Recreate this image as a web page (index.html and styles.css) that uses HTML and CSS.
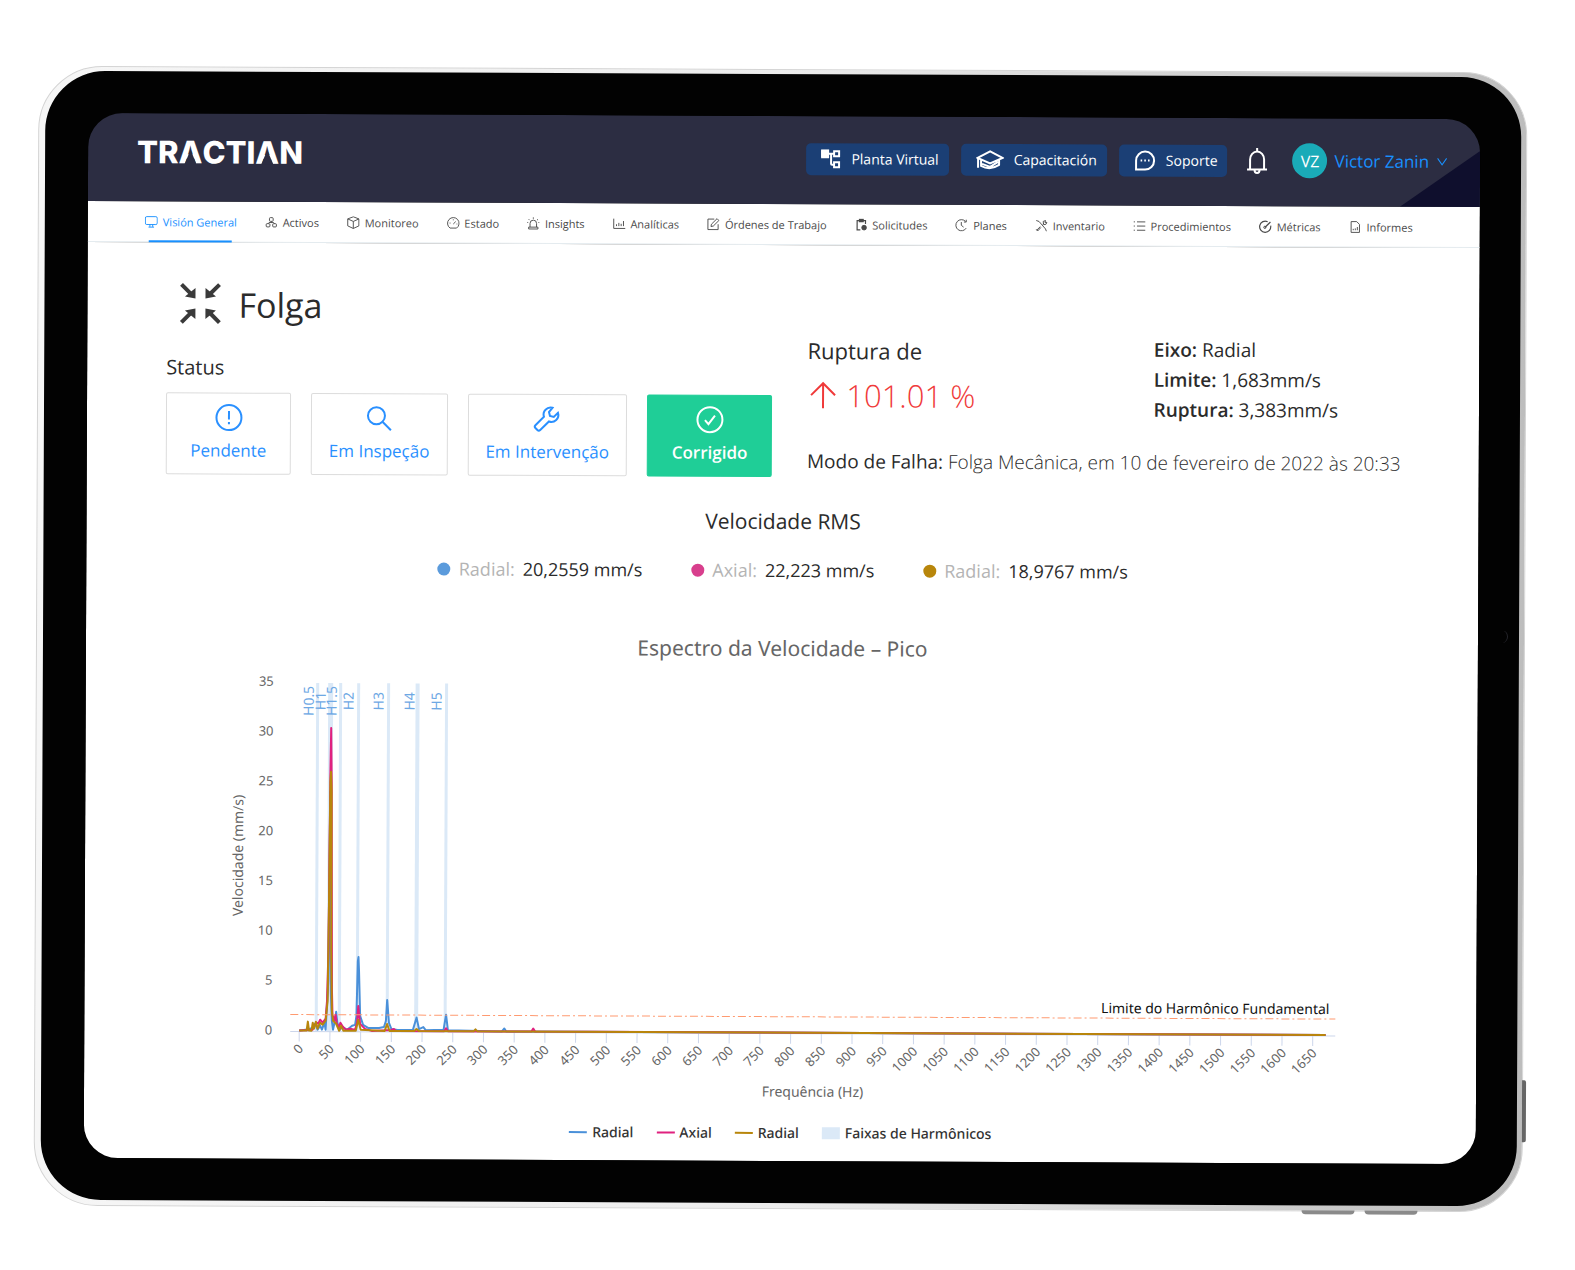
FILE: index.html
```html
<!DOCTYPE html>
<html lang="pt">
<head>
<meta charset="utf-8">
<meta name="viewport" content="width=device-width, initial-scale=1">
<title>Tractian</title>
<link rel="stylesheet" href="styles.css">
</head>
<body>
<div class="device">
  <span class="side-button side-button-right"></span>
  <span class="side-button side-button-bottom first"></span>
  <span class="side-button side-button-bottom second"></span>
  <div class="bezel">
    <span class="camera"></span>
    <div class="screen">
      <header class="topbar">
        <a class="logo" href="#">TR<span class="open-a">A</span>CTI<span class="open-a">A</span>N</a>
        <div class="actions">
          <button class="action" type="button">
            <svg class="action-icon" width="20" height="20" viewBox="0 0 20 20"><rect x="0" y="1" width="7" height="7" fill="currentColor"/><path d="M7 4.500h6M10 4.500v10q0 1 1 1h2"/><rect x="13" y="2" width="5" height="5"/><rect x="13" y="13" width="5" height="5"/></svg>
            Planta Virtual
          </button>
          <button class="action" type="button">
            <svg class="action-icon" width="28" height="20" viewBox="0 0 28 20"><path d="M1.500 8 14 1.500 26.500 8 14 13.500zM5 10v6q9 5 18-1V10M2 9v9M6 14l8 3 8-5"/></svg>
            Capacitación
          </button>
          <button class="action" type="button">
            <svg class="action-icon" width="22" height="22" viewBox="0 0 22 22"><path d="M2 20V11a9 9 0 1 1 9 9z"/><path d="M6.500 11h1.600M10.200 11h1.600M13.900 11h1.600" stroke-width="2"/></svg>
            Soporte
          </button>
          <button class="bell" type="button" aria-label="Notificaciones">
            <svg width="22" height="28" viewBox="0 0 22 28"><path d="M11 1v3M4 22v-9.500a7 8 0 0 1 14 0V22M1 22.500h20M8.500 23a2.500 3 0 0 0 5 0"/></svg>
          </button>
          <button class="user" type="button">
            <span class="avatar">VZ</span>
            Victor Zanin
            <svg width="12" height="10" viewBox="0 0 12 10"><path d="M1.500 1.500 6 8l4.500-6.500"/></svg>
          </button>
        </div>
      </header>

      <nav class="tabs">
        <a class="tab active" href="#"><svg viewBox="0 0 14 14"><rect x="0.600" y="1.500" width="12.800" height="8.500" rx="1.500"/><path d="M5.500 10v2.500M8.500 10v2.500M4 12.800h6"/></svg>Visión General</a>
        <a class="tab" href="#"><svg viewBox="0 0 14 14"><rect x="5" y="2" width="4" height="4" rx="1"/><rect x="1.500" y="8.500" width="4" height="3.500" rx="1"/><rect x="8.500" y="8.500" width="4" height="3.500" rx="1"/><path d="M7 6v1.500M3.500 8.500l1-1.200h5l1 1.200"/></svg>Activos</a>
        <a class="tab" href="#"><svg viewBox="0 0 14 14"><path d="M7 .7 13 3v7.500L7 13.300 1 10.500V3zM1 3l6 2.700L13 3M7 5.700v7.600"/></svg>Monitoreo</a>
        <a class="tab" href="#"><svg viewBox="0 0 14 14"><path d="M3.500 12.400a6.200 6.200 0 1 1 7 0zM7 8l2.600-2.600M3 7h1M7 3v1M10.500 8h.8"/></svg>Estado</a>
        <a class="tab" href="#"><svg viewBox="0 0 14 14"><path d="M3.500 11V7a3.500 3.500 0 0 1 7 0v4M2 11h10v2H2zM7 .5v1.500M2 2.500l1 1M12 2.500l-1 1M.5 6h1M12.500 6h1"/></svg>Insights</a>
        <a class="tab" href="#"><svg viewBox="0 0 14 14"><path d="M1 1.500V12h12.500M4 9.500v-2M6.500 9.500V6M9 9.500V7M11.500 9.500V4"/></svg>Analíticas</a>
        <a class="tab" href="#"><svg viewBox="0 0 14 14"><path d="M8 1.500H1.200v11.300h11V7M4.500 9.500l.5-2.500L11 1l2 2-6 6z"/></svg>Órdenes de Trabajo</a>
        <a class="tab" href="#"><svg viewBox="0 0 14 14"><path d="M6 12.500H2.500v-10h9V6M5 1h4v2.500H5z" stroke-width="1.300"/><circle cx="10" cy="10" r="2.500" fill="currentColor"/></svg>Solicitudes</a>
        <a class="tab" href="#"><svg viewBox="0 0 14 14"><path d="M11.500 2.800a6 6 0 1 0 .8 7.200M7 3.500V7l2.500 2M12.300 1v2.500H9.800"/></svg>Planes</a>
        <a class="tab" href="#"><svg viewBox="0 0 14 14"><path d="M1.500 1.500l3 1 7 8 1 2.500M2 12l4-4M8.500 5.500 10 4M1.500 11l1.700 1.700L6.500 9M9 2.500 11.500 1.500 11 3.500 13 3.500 12 5.500 9.500 6z"/></svg>Inventario</a>
        <a class="tab" href="#"><svg viewBox="0 0 14 14"><path d="M4.500 2.500h9M4.500 7h9M4.500 11.500h9M1 2.500h1.300M1 7h1.300M1 11.500h1.300"/></svg>Procedimientos</a>
        <a class="tab" href="#"><svg viewBox="0 0 14 14"><path d="M9.500 1.700A6 6 0 1 0 12.800 6M6.500 8l6-6" stroke-width="1.300"/><circle cx="6.500" cy="7.800" r="1.200"/></svg>Métricas</a>
        <a class="tab" href="#"><svg viewBox="0 0 14 14"><path d="M2.500 1.200h6l3 3v8.600h-9zM4.800 10.500V9M7 10.500v-2M9.200 10.500V7"/></svg>Informes</a>
      </nav>

      <main class="content">
        <div class="title-row">
          <svg class="title-icon" width="42" height="42" viewBox="0 0 42 42"><path d="M2 2 12 12M40 2 30 12M2 40 12 30M40 40 30 30" stroke="currentColor" stroke-width="4" fill="none"/><path d="M16 16V5.500L5.500 14zM26 16V5.500L36.500 14zM16 26v10.500L5.500 28zM26 26v10.500L36.500 28z" fill="currentColor"/></svg>
          <h1>Folga</h1>
        </div>

        <div class="summary">
          <section class="status">
            <h2>Status</h2>
            <div class="status-options">
              <button class="status-card" type="button">
                <svg width="28" height="28" viewBox="0 0 28 28"><circle cx="14" cy="14" r="12.500"/><path d="M14 7.500v8.500M14 18.500v2.200"/></svg>
                Pendente
              </button>
              <button class="status-card" type="button">
                <svg width="28" height="28" viewBox="0 0 28 28"><circle cx="11.500" cy="11.500" r="8.500"/><path d="M17.800 17.800 26 26"/></svg>
                Em Inspeção
              </button>
              <button class="status-card" type="button">
                <svg width="28" height="28" viewBox="0 0 28 28"><path d="M19.500 2.800a7 7 0 0 0-8.500 9L2.500 20.300a2 2 0 0 0 0 2.800l2 2a2 2 0 0 0 2.800 0l8.700-8.600a7 7 0 0 0 9-8.800l-4.200 4.200-3.800-1-1-3.800z"/></svg>
                Em Intervenção
              </button>
              <button class="status-card done" type="button">
                <svg width="28" height="28" viewBox="0 0 28 28"><circle cx="14" cy="14" r="12.500"/><path d="M9 14.500l3.500 4 6.500-8.500"/></svg>
                Corrigido
              </button>
            </div>
          </section>

          <section class="failure">
            <div class="failure-top">
              <div>
                <p class="rupture-label">Ruptura de</p>
                <p class="rupture-value"><svg width="30" height="28" viewBox="0 0 30 28"><path d="M16 27V2M4 14 16 2l12 12"/></svg>101.01 %</p>
              </div>
              <div class="limits">
                <p><strong>Eixo:</strong> Radial</p>
                <p><strong>Limite:</strong> 1,683mm/s</p>
                <p><strong>Ruptura:</strong> 3,383mm/s</p>
              </div>
            </div>
            <p class="mode"><strong>Modo de Falha:</strong> Folga Mecânica, em 10 de fevereiro de 2022 às 20:33</p>
          </section>
        </div>

        <section class="rms">
          <h2>Velocidade RMS</h2>
          <ul class="readings">
            <li><span class="dot blue"></span><span class="axis-name">Radial:</span> 20,2559 mm/s</li>
            <li><span class="dot pink"></span><span class="axis-name">Axial:</span> 22,223 mm/s</li>
            <li><span class="dot gold"></span><span class="axis-name">Radial:</span> 18,9767 mm/s</li>
          </ul>
        </section>

        <section class="spectrum">
          <h2>Espectro da Velocidade – Pico</h2>
          <svg id="plot" class="plot" viewBox="0 0 1120 436" role="img" aria-label="Espectro da Velocidade"></svg>
          <ul class="legend">
            <li><span class="line blue"></span>Radial</li>
            <li><span class="line pink"></span>Axial</li>
            <li><span class="line gold"></span>Radial</li>
            <li><span class="band"></span>Faixas de Harmônicos</li>
          </ul>
        </section>
      </main>
    </div>
  </div>
</div>
<script src="chart.js"></script>
</body>
</html>
```
FILE: styles.css
```css
* { box-sizing: border-box; }

body {
  margin: 0;
  background: #fff;
  color: #2b2b2b;
  font-family: "Open Sans", "Noto Sans", sans-serif;
}

h1, h2, p, ul { margin: 0; padding: 0; font-weight: 400; }
ul { list-style: none; }
button { font: inherit; cursor: pointer; }
svg { display: block; flex: none; fill: none; stroke: none; }

/* Tablet frame */
.device {
  position: relative;
  margin: 69px 50px 56px 36px;
  padding: 4px 5px 5px 6px;
  border: 1px solid #d4d4d4;
  border-radius: 64px;
  background: linear-gradient(90deg, #f6f6f6 0%, #ededed 50%, #bdbdbd 100%);
  transform: rotate(0.25deg);
}

.bezel {
  position: relative;
  padding: 42px 41px 42px 43px;
  border-radius: 60px;
  background: #020202;
}

.screen {
  overflow: hidden;
  border-radius: 34px;
}

.camera {
  position: absolute;
  right: 11px;
  top: 49%;
  width: 13px;
  height: 13px;
  border-right: 1px solid #26262c;
  border-radius: 50%;
}

.side-button { position: absolute; background: #8a8a8a; }
.side-button-right { right: -4px; bottom: 69px; width: 4px; height: 62px; border-radius: 0 2px 2px 0; background: #666; }
.side-button-bottom { bottom: -4px; width: 53px; height: 4px; border-radius: 0 0 4px 4px; }
.side-button-bottom.first { right: 167px; }
.side-button-bottom.second { right: 104px; }

/* Top bar */
.topbar {
  position: relative;
  display: flex;
  align-items: center;
  justify-content: space-between;
  height: 88px;
  padding: 0 32px 3px 49px;
  background: #2c2d42;
  color: #fff;
}

.topbar::after {
  content: "";
  position: absolute;
  right: 0;
  bottom: 0;
  width: 80px;
  height: 56px;
  background: #0f0f2d;
  clip-path: polygon(100% 0, 100% 100%, 0 100%);
}

.logo {
  padding-bottom: 8px;
  color: #fff;
  font-family: Inter, sans-serif;
  font-size: 31px;
  font-weight: 800;
  line-height: 40px;
  text-decoration: none;
}

/* The wordmark's A has no crossbar */
.open-a { position: relative; display: inline-block; }
.open-a::after {
  content: "";
  position: absolute;
  bottom: 8px;
  left: calc(50% - 6px);
  width: 12px;
  height: 14px;
  background: #2c2d42;
  clip-path: polygon(50% 0, 100% 100%, 0 100%);
}

.actions { position: relative; z-index: 1; display: flex; align-items: center; gap: 12px; }
.actions svg { stroke: currentColor; stroke-width: 2; }

.action {
  display: flex;
  align-items: center;
  gap: 10px;
  height: 32px;
  padding: 0 10px 0 15px;
  border: 0;
  border-radius: 5px;
  background: #1b3f75;
  color: #fff;
  font-size: 14px;
  font-weight: 500;
  white-space: nowrap;
}

.bell { margin: 0 12px 0 7px; padding: 0; border: 0; background: none; color: #fff; }

.user {
  display: flex;
  align-items: center;
  gap: 7px;
  padding: 0;
  border: 0;
  background: none;
  color: #1890ff;
  font-size: 17px;
  white-space: nowrap;
}

.user svg { stroke-width: 1; }

.avatar {
  display: grid;
  place-items: center;
  width: 35px;
  height: 35px;
  border-radius: 50%;
  background: #1aabb8;
  color: #fff;
  font-size: 16px;
}

/* Tabs */
.tabs {
  display: flex;
  justify-content: space-between;
  height: 41px;
  padding: 0 67px 0 57px;
  border-bottom: 1px solid #e4ebef;
  background: #fff;
}

.tab {
  position: relative;
  display: flex;
  align-items: center;
  gap: 5px;
  color: #4a4a4a;
  font-size: 11px;
  text-decoration: none;
  white-space: nowrap;
}

.tab svg { width: 13px; height: 13px; stroke: currentColor; stroke-width: 1; }
.tab.active { color: #1890ff; }

.tab.active::after {
  content: "";
  position: absolute;
  right: 5px;
  bottom: -1px;
  left: 4px;
  height: 2px;
  background: #1890ff;
}

/* Content */
.content { padding: 36px 78px 18px 79px; background: #fff; }

.title-row { display: flex; align-items: center; gap: 17px; height: 50px; margin: 0 0 2px 13px; }
.title-icon { color: #3a3a3a; }
h1 { padding-top: 2px; font-size: 34px; line-height: 48px; }

.summary { display: grid; grid-template-columns: auto 1fr; gap: 35px; }

.status { padding-top: 22px; }
.status h2 { margin-bottom: 10px; font-size: 20px; line-height: 30px; }
.status-options { display: flex; gap: 20px; }

.status-card {
  display: flex;
  flex-direction: column;
  align-items: center;
  gap: 7px;
  min-width: 125px;
  height: 82px;
  padding: 10px 17px 8px;
  border: 1px solid #dcdcdc;
  border-radius: 2px;
  background: #fff;
  color: #2a90ff;
  font-size: 17px;
  font-weight: 500;
  line-height: 24px;
  white-space: nowrap;
}

.status-card svg { stroke: currentColor; stroke-width: 2; }
.status-card.done { border-color: #1fce97; background: #1fce97; color: #fff; font-weight: 600; }

.failure-top { display: grid; grid-template-columns: 7fr 5fr; }
.rupture-label { font-size: 22px; line-height: 34px; }
.rupture-value { display: flex; align-items: center; gap: 9px; color: #f03a3a; font-size: 31px; font-weight: 300; line-height: 56px; white-space: nowrap; }
.rupture-value svg { stroke: currentColor; stroke-width: 2; }
.limits { font-size: 19px; line-height: 30px; white-space: nowrap; }
.limits strong { font-weight: 600; }
.mode { margin-top: 24px; font-size: 19px; font-weight: 300; line-height: 28px; white-space: nowrap; }
.mode strong { font-weight: 500; }

.rms { margin-top: 28px; text-align: center; }
.rms h2 { font-size: 21px; line-height: 32px; }

.readings { display: flex; justify-content: center; gap: 49px; margin-top: 19px; font-size: 18px; line-height: 28px; }
.readings li { display: flex; align-items: center; gap: 8px; white-space: nowrap; }
.axis-name { color: #b4b4b4; }
.dot { width: 13px; height: 13px; border-radius: 50%; }
.dot.blue { background: #5b9bdc; }
.dot.pink { background: #d83f8d; }
.dot.gold { background: #b8860b; }

.spectrum { margin-top: 48px; font-family: "Noto Sans", sans-serif; }
.spectrum h2 { color: #666; font-size: 21px; line-height: 32px; text-align: center; }

.plot { width: calc(100% - 116px); margin: 4px 55px 0 61px; fill: #666; font-size: 13px; }
.plot .band { fill: #dbe9f7; }
.plot .band-name { fill: #6ea8e4; font-size: 14px; }
.plot .axis { stroke: #ccd6eb; stroke-width: 1; }
.plot .axis-title { font-size: 14px; }
.plot .limit { stroke: #ff9a70; stroke-width: 1; stroke-dasharray: 8 3 2 3; }
.plot .limit-name { fill: #111; font-size: 14px; }
.plot .series { fill: none; stroke-width: 2; stroke-linejoin: round; }
.plot .blue { stroke: #4a90d9; }
.plot .pink { stroke: #e0217f; }
.plot .gold { stroke: #b8860b; }

.legend { display: flex; justify-content: center; gap: 23px; margin-top: 19px; color: #333; font-size: 14px; font-weight: 500; line-height: 20px; }
.legend li { display: flex; align-items: center; gap: 5px; white-space: nowrap; }
.legend .line { width: 18px; height: 2px; }
.legend .blue { background: #4a90d9; }
.legend .pink { background: #e0217f; }
.legend .gold { background: #b8860b; }
.legend .band { width: 18px; height: 12px; background: #dbe9f7; }
```
FILE: chart.js
```js
const plot = document.getElementById('plot');
const X0 = 75, BASE = 366, TOP = 17, PX_PER_HZ = 0.6148, PX_PER_UNIT = 9.97;
const px = hz => X0 + hz * PX_PER_HZ;
const py = v => BASE - v * PX_PER_UNIT;

function add(tag, attrs, text) {
  const el = document.createElementNS('http://www.w3.org/2000/svg', tag);
  for (const key in attrs) el.setAttribute(key, attrs[key]);
  if (text !== undefined) el.textContent = text;
  plot.appendChild(el);
}

// Harmonic bands: centre, width, label centre
const bands = [
  ['H0.5', 92, 3, 83], ['H1', 105, 5, 95], ['H1.5', 115, 3, 106], ['H2', 133, 3, 123],
  ['H3', 163, 3, 153], ['H4', 192, 4, 184], ['H5', 221, 3, 211]
];
for (const [, x, w] of bands) {
  add('rect', { class: 'band', x: x - w / 2, y: TOP, width: w, height: BASE - TOP });
}
for (const [name, , , x] of bands) {
  add('text', { class: 'band-name', 'text-anchor': 'middle', transform: `translate(${x + 5} 35) rotate(-90)` }, name);
}

// Axes
add('line', { class: 'axis', x1: 66, y1: BASE, x2: 1112, y2: BASE });
for (let v = 0; v <= 35; v += 5) {
  add('text', { x: 48, y: py(v) + 3, 'text-anchor': 'end' }, v);
}
for (let hz = 0; hz <= 1650; hz += 50) {
  add('line', { class: 'axis', x1: px(hz), y1: BASE, x2: px(hz), y2: BASE + 10 });
  add('text', { 'text-anchor': 'end', transform: `translate(${px(hz) + 5} ${BASE + 18}) rotate(-45)` }, hz);
}
add('text', { class: 'axis-title', 'text-anchor': 'middle', transform: 'translate(18 190) rotate(-90)' }, 'Velocidade (mm/s)');
add('text', { class: 'axis-title', x: 589, y: 429, 'text-anchor': 'middle' }, 'Frequência (Hz)');

// Spectra, as [Hz, mm/s]
const series = {
  blue: [[0, 0], [14, 0.1], [22, 0.3], [26, 0.7], [30, 0.1], [34, 0.5], [37, 0.1], [41, 0.8], [43, 0.1], [47, 5], [49, 24], [51, 4], [53, 1], [55, 0.1], [58, 1], [60, 1.9], [62, 0.8], [66, 0.1], [70, 0.4], [78, 0.1], [86, 0.5], [91, 0.6], [93, 1.5], [95, 7], [96, 7.4], [97, 6], [99, 1.5], [104, 0.6], [112, 0.3], [130, 0.3], [138, 0.4], [141, 1], [143, 3.1], [146, 0.8], [150, 0.2], [160, 0.1], [185, 0.1], [191, 1.35], [195, 0.2], [202, 0.4], [206, 0.1], [235, 0.15], [239, 1.65], [242, 0.1], [330, 0], [334, 0.3], [337, 0], [1671, 0]],
  pink: [[0, 0], [22, 0.1], [25, 0.5], [28, 0.8], [31, 0.7], [34, 1.1], [38, 0.8], [43, 1.2], [45, 3], [47, 8], [49, 26], [50, 30.4], [51, 25], [53, 4], [54, 1.6], [57, 1], [59, 1.6], [61, 0.8], [64, 0.3], [67, 0.8], [71, 0.4], [76, 0.1], [82, 0.2], [91, 0.1], [94, 0.8], [96, 2.5], [99, 0.7], [107, 0.2], [118, 0], [150, 0.1], [154, 0.2], [158, 0], [236, 0], [239, 0.3], [242, 0], [378, 0], [381, 0.3], [384, 0], [1671, 0]],
  gold: [[0, 0], [12, 0], [14, 0.9], [16, 0], [20, 0], [22, 0.8], [24, 0.2], [27, 0.9], [30, 0.2], [34, 0.8], [38, 0.6], [43, 1], [46, 3], [47.500, 12], [49, 25], [50, 26], [51, 24], [51.500, 8], [53, 2], [55, 1], [60, 0.7], [65, 0], [68, 0.5], [72, 0], [92, 0], [96, 1.1], [100, 0.1], [139, 0], [143, 0.7], [147, 0], [187, 0], [191, 0.2], [195, 0], [284, 0], [287, 0.2], [290, 0], [1671, 0]]
};
for (const name in series) {
  const d = 'M' + series[name].map(([hz, v]) => `${px(hz).toFixed(1)} ${(py(v) - 1).toFixed(1)}`).join('L');
  add('path', { class: 'series ' + name, d });
}

// Limit of the fundamental harmonic
add('line', { class: 'limit', x1: 66, y1: 349, x2: 1112, y2: 349 });
add('text', { class: 'limit-name', x: 1106, y: 344, 'text-anchor': 'end' }, 'Limite do Harmônico Fundamental');
```
